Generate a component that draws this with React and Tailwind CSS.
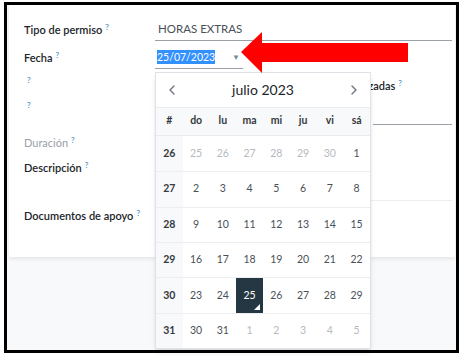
import React from 'react';
import { ChevronLeft, ChevronRight } from 'lucide-react';

const font = { fontFamily: 'Lato, "Open Sans", sans-serif' };

const Help = () => <sup className="ml-[3px] text-[8px] text-[#4c8fc0] font-semibold">?</sup>;

const weeks = [
  { n: 26, days: [[25, 1], [26, 1], [27, 1], [28, 1], [29, 1], [30, 1], [1, 0]] },
  { n: 27, days: [[2, 0], [3, 0], [4, 0], [5, 0], [6, 0], [7, 0], [8, 0]] },
  { n: 28, days: [[9, 0], [10, 0], [11, 0], [12, 0], [13, 0], [14, 0], [15, 0]] },
  { n: 29, days: [[16, 0], [17, 0], [18, 0], [19, 0], [20, 0], [21, 0], [22, 0]] },
  { n: 30, days: [[23, 0], [24, 0], [25, 2], [26, 0], [27, 0], [28, 0], [29, 0]] },
  { n: 31, days: [[30, 0], [31, 0], [1, 1], [2, 1], [3, 1], [4, 1], [5, 1]] },
];

const dayNames = ['do', 'lu', 'ma', 'mi', 'ju', 'vi', 'sá'];

const Calendar = () => (
  <div className="absolute left-[155px] top-[72px] w-[216px] h-[277px] bg-white border border-[#dee2e6] shadow-md flex flex-col text-[10.5px]">
    {/* Header */}
    <div className="h-[35px] flex items-center justify-between px-[8px] border-b border-[#e9ecef]">
      <ChevronLeft className="w-[16px] h-[16px] text-[#6c757d]" strokeWidth={2} />
      <span className="text-[14px] text-[#212529]">julio 2023</span>
      <ChevronRight className="w-[16px] h-[16px] text-[#6c757d]" strokeWidth={2} />
    </div>
    <div className="h-[28px] grid grid-cols-8 bg-[#f8f9fa] border-b border-[#e9ecef] font-bold text-[#343a40]">
      <div className="flex items-center justify-center">#</div>
      {dayNames.map(d => (
        <div key={d} className="flex items-center justify-center">{d}</div>
      ))}
    </div>
    {weeks.map((w, i) => (
      <div key={w.n} className={`h-[35.5px] grid grid-cols-8 ${i > 0 ? 'border-t border-[#eceef0]' : ''}`}>
        <div className="flex items-center justify-center bg-[#f8f9fa] font-bold text-[#343a40]">{w.n}</div>
        {w.days.map(([d, t], j) => (
          t === 2 ? (
            <div key={j} className="relative flex items-center justify-center bg-[#243742] text-white">
              {d}
              <span className="absolute right-[3px] bottom-[3px] w-0 h-0 border-l-[6px] border-l-transparent border-b-[6px] border-b-white" />
            </div>
          ) : (
            <div key={j} className={`flex items-center justify-center ${t === 1 ? 'text-[#b5bac0]' : 'text-[#495057]'}`}>{d}</div>
          )
        ))}
      </div>
    ))}
  </div>
);

const Arrow = () => (
  <svg className="absolute left-0 top-0" width="464" height="360" viewBox="0 0 464 360">
    <polygon points="241,52 262,32 262,43 408,43 408,62 262,62 262,73" fill="#ff0000" />
  </svg>
);

export default function App() {
  return (
    <div className="relative w-[464px] h-[360px] bg-white overflow-hidden" style={font}>
      <div className="ml-[4px] mt-[2px] w-[455px] h-[351px] border-[3px] border-black bg-[#f8f9fa] pl-[2px] pr-[1px]">
        <div className="bg-white h-[252px] shadow-[0_2px_4px_rgba(0,0,0,0.08)] pl-[15px] pr-[3px] pt-[13px] text-[11px] text-[#212529]">
          {/* Tipo de permiso */}
          <div className="flex h-[24px]">
            <div className="w-[131px] leading-[24px] font-semibold">Tipo de permiso<Help /></div>
            <div className="flex-1 h-[23px] border-b border-[#9aa0a6] pl-[3px] leading-[22px] text-[#495057] uppercase text-[11.5px]">Horas extras</div>
          </div>
          {/* Fecha */}
          <div className="flex h-[24px] mt-[4px]">
            <div className="w-[131px] leading-[24px] font-semibold">Fecha<Help /></div>
            <div className="w-[88px] h-[23px] border-b border-[#9aa0a6] flex items-center pl-[2px] pr-[3px] justify-between">
              <span className="bg-[#3390ff] text-white leading-[14px] text-[10.5px]">25/07/2023</span>
              <span className="text-[8px] text-[#6f8fa3]">▼</span>
            </div>
          </div>
          {/* Row 3 */}
          <div className="flex h-[22px] mt-[2px] items-center">
            <div className="w-[131px] font-semibold"><Help /></div>
            <div className="flex-1 flex justify-end pr-[50px] pt-[6px] font-semibold">
              <span>Horas realizadas<Help /></span>
            </div>
          </div>
          {/* Row 4 */}
          <div className="flex h-[28px] mt-[3px]">
            <div className="w-[131px] leading-[22px] font-semibold"><Help /></div>
            <div className="flex-1" />
            <div className="w-[79px] border-b border-[#9aa0a6]" />
          </div>
          {/* Duración */}
          <div className="flex h-[22px] mt-[7px] items-center">
            <div className="w-[131px] text-[#9aa0a6]">Duración<Help /></div>
          </div>
          {/* Descripción */}
          <div className="flex h-[44px] mt-[3px]">
            <div className="w-[131px] leading-[22px] font-semibold">Descripción<Help /></div>
            <div className="flex-1 border-b border-[#eceef0]" />
          </div>
          {/* Documentos */}
          <div className="flex h-[22px] mt-[4px] items-center">
            <div className="w-[131px] font-semibold">Documentos de apoyo<Help /></div>
          </div>
        </div>
      </div>
      <Calendar />
      <Arrow />
    </div>
  );
}
